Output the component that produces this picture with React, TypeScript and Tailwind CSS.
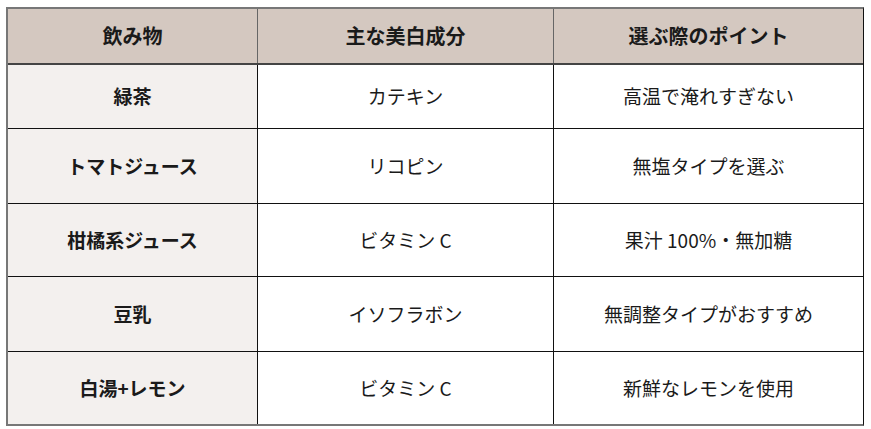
const rows = [
  { drink: '緑茶', item: 'カテキン', point: '高温で淹れすぎない', h: 'h-[64px]' },
  { drink: 'トマトジュース', item: 'リコピン', point: '無塩タイプを選ぶ', h: 'h-[75px]' },
  { drink: '柑橘系ジュース', item: 'ビタミン C', point: '果汁 100%・無加糖', h: 'h-[73px]' },
  { drink: '豆乳', item: 'イソフラボン', point: '無調整タイプがおすすめ', h: 'h-[75px]' },
  { drink: '白湯+レモン', item: 'ビタミン C', point: '新鮮なレモンを使用', h: 'h-[72px]' },
];

export default function App() {
  return (
    <div
      className="w-[871px] h-[429px] bg-white pt-[7px] pl-[6px] text-[#1a1a1a]"
      style={{ fontFamily: '"Noto Sans CJK JP", "Noto Sans", sans-serif' }}
    >
      <div className="w-[858px] border-l-2 border-t-2 border-b-2 border-r border-l-[#777] border-t-[#777] border-b-[#777] border-r-[#111]">
        <div className="grid grid-cols-[250px_296px_1fr] h-[56px] bg-[#d4c8c0] border-b-2 border-[#444] text-[20px] font-bold">
          <div className="flex items-center justify-center border-r border-[#666]">飲み物</div>
          <div className="flex items-center justify-center border-r border-[#666]">主な美白成分</div>
          <div className="flex items-center justify-center">選ぶ際のポイント</div>
        </div>
        {rows.map((r, i) => (
          <div
            key={i}
            className={`grid grid-cols-[250px_296px_1fr] ${r.h} text-[19px] ${i < rows.length - 1 ? 'border-b border-[#111]' : ''}`}
          >
            <div className="flex items-center justify-center bg-[#f3f0ee] border-r border-[#111] font-bold">{r.drink}</div>
            <div className="flex items-center justify-center border-r border-[#111]">{r.item}</div>
            <div className="flex items-center justify-center">{r.point}</div>
          </div>
        ))}
      </div>
    </div>
  );
}
